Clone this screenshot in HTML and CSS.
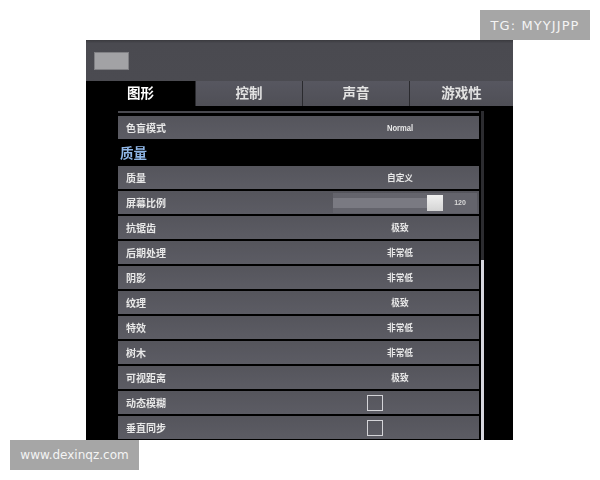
FILE: index.html
```html
<!DOCTYPE html>
<html lang="zh">
<head>
<meta charset="utf-8">
<title>图形设置</title>
<link rel="stylesheet" href="styles.css">
</head>
<body>
<div class="badge badge-top">TG: MYYJJPP</div>
<main class="window">
  <header class="topbar"><div class="back-btn"></div></header>
  <nav class="tabs">
    <div class="tab active">图形</div>
    <div class="tab">控制</div>
    <div class="tab">声音</div>
    <div class="tab">游戏性</div>
  </nav>
  <div class="body">
    <div class="list">
      <div class="row"><span class="label">色盲模式</span><span class="value latin">Normal</span></div>
      <h2 class="section">质量</h2>
      <div class="rows">
        <div class="row"><span class="label">质量</span><span class="value">自定义</span></div>
        <div class="row"><span class="label">屏幕比例</span>
          <div class="slider"><div class="track"></div><div class="thumb"></div><span class="num">120</span></div>
        </div>
        <div class="row"><span class="label">抗锯齿</span><span class="value">极致</span></div>
        <div class="row"><span class="label">后期处理</span><span class="value">非常低</span></div>
        <div class="row"><span class="label">阴影</span><span class="value">非常低</span></div>
        <div class="row"><span class="label">纹理</span><span class="value">极致</span></div>
        <div class="row"><span class="label">特效</span><span class="value">非常低</span></div>
        <div class="row"><span class="label">树木</span><span class="value">非常低</span></div>
        <div class="row"><span class="label">可视距离</span><span class="value">极致</span></div>
        <div class="row"><span class="label">动态模糊</span><span class="check"></span></div>
        <div class="row"><span class="label">垂直同步</span><span class="check"></span></div>
      </div>
    </div>
    <div class="scrollbar"><div class="scroll-thumb"></div></div>
  </div>
</main>
<div class="badge badge-bottom">www.dexinqz.com</div>
</body>
</html>
```

FILE: styles.css
```css
* { box-sizing: border-box; }
html, body { margin: 0; height: 100%; }
body {
  position: relative;
  width: 600px;
  height: 480px;
  padding: 40px 0 0 86px;
  background: #fff;
  overflow: hidden;
  font-family: "Noto Sans CJK SC", "Noto Sans", sans-serif;
}
.badge {
  position: absolute;
  background: #a6a6a6;
  color: #f4f4f4;
  font-family: "DejaVu Sans", "Liberation Sans", sans-serif;
  display: flex;
  align-items: center;
  justify-content: center;
}
.badge-top { left: 480px; top: 10px; width: 110px; height: 30px; font-size: 13px; letter-spacing: 1.1px; }
.badge-bottom { left: 10px; top: 440px; width: 129px; height: 30px; font-size: 12px; }
.window {
  width: 427px;
  height: 400px;
  background: #000;
  overflow: hidden;
  display: flex;
  flex-direction: column;
  filter: blur(0.35px);
}
.topbar {
  height: 41px;
  flex: none;
  background: linear-gradient(#3a3a3e, #4a4a50 8%, #4b4b51);
  padding: 12px 0 0 8px;
}
.back-btn {
  width: 35px;
  height: 18px;
  background: #a2a2a5;
  border: 1px solid #808084;
}
.tabs {
  display: grid;
  grid-template-columns: 109px 107px 107px 104px;
  height: 25px;
  flex: none;
}
.tab {
  display: flex;
  align-items: center;
  justify-content: center;
  background: linear-gradient(#575760, #4f4f56);
  border-left: 1px solid #2a2a2e;
  color: #e2e2e2;
  font-size: 13.5px;
  font-weight: 700;
  line-height: 1;
  padding-bottom: 2px;
}
.tab.active {
  background: #000;
  border-left: 0;
  color: #fff;
  justify-content: flex-start;
  padding-left: 41px;
}
.body {
  flex: 1;
  min-height: 0;
  display: flex;
  padding: 5px 0 0 32px;
  overflow: hidden;
}
.list {
  width: 361px;
  flex: none;
  border-top: 2px solid #4a4a50;
  padding-top: 3px;
}
.rows { display: flex; flex-direction: column; gap: 2px; }
.row {
  height: 23px;
  flex: none;
  display: grid;
  grid-template-columns: 215px 134px;
  align-items: center;
  background: linear-gradient(#55555c, #5c5c64);
}
.label {
  padding-left: 8px;
  color: #e8e8e8;
  font-size: 10px;
  font-weight: 700;
  line-height: 1;
}
.value {
  text-align: center;
  color: #e8e8e8;
  font-size: 8.7px;
  font-weight: 700;
  line-height: 1;
  padding-top: 2px;
}
.value.latin {
  font-family: "Liberation Sans", sans-serif;
  font-size: 9.5px;
  transform: scaleX(0.8);
  padding-top: 0;
}
.section {
  height: 27px;
  margin: 0;
  padding-left: 2px;
  display: flex;
  align-items: center;
  color: #8fb6e6;
  font-size: 13.5px;
  font-weight: 700;
  line-height: 1;
}
.slider {
  width: 144px;
  height: 20px;
  display: grid;
  grid-template-columns: 94px 16px 1fr;
  align-items: center;
  background: #64646c;
}
.track { height: 10px; background: #7a7a82; }
.thumb { height: 16px; background: linear-gradient(#f0f0f0, #d4d4d4); }
.num { text-align: center; color: #d8d8d8; font-size: 7px; font-family: "Liberation Sans", sans-serif; font-weight: 700; }
.check {
  width: 16px;
  height: 16px;
  margin-left: 34px;
  border: 1px solid #d4d4d8;
}
.scrollbar {
  width: 3px;
  margin-left: 2px;
  background: #2c2c30;
  flex: none;
  padding-top: 149px;
}
.scroll-thumb { height: 100%; background: #d6d6de; }
```
